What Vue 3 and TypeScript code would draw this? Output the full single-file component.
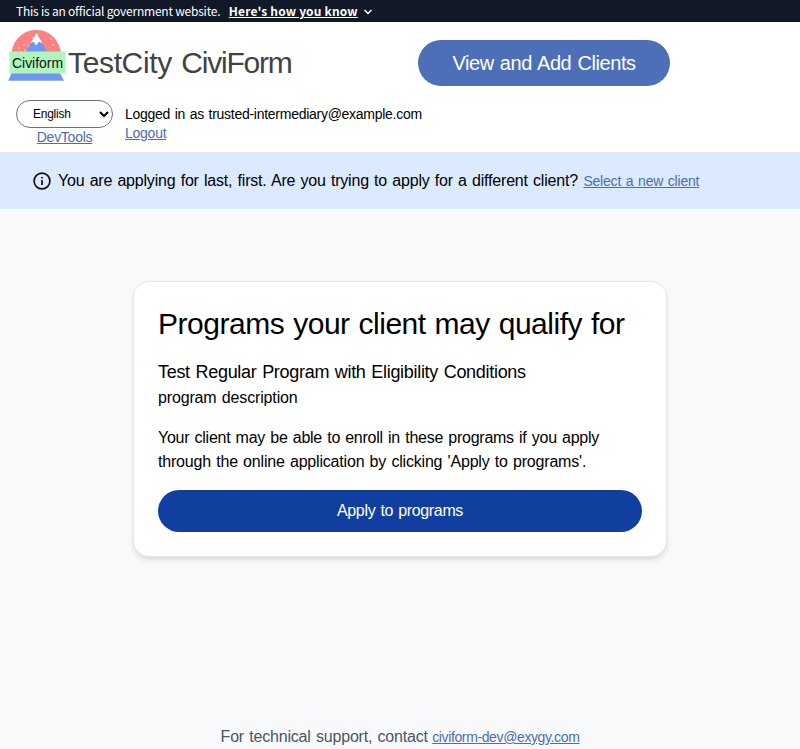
<script setup lang="ts">
import { ref } from 'vue'

const language = ref('English')
const client = 'last, first'
const account = 'trusted-intermediary@example.com'
const snow: [number, number][] = [[13, 24], [16, 16], [20, 17], [25, 9], [43, 10], [45, 16], [50, 14], [17, 21], [11, 19]]
</script>

<template>
  <div class="page">
    <div class="gov-banner">
      <span class="gov-text">This is an official government website.</span>
      <button class="gov-toggle" type="button">Here's how you know</button>
      <svg class="chevron" viewBox="0 0 10 8" aria-hidden="true"><path d="M1.5 2 L5 5.5 L8.5 2" /></svg>
    </div>

    <header class="header">
      <div class="header-main">
        <a class="brand">
          <svg class="logo" viewBox="0 0 60 54" aria-hidden="true">
            <path d="M3.500 23 C6 8 17 1 28.500 1 C40 1 50 8 53 23 Z" fill="#fb8383" />
            <circle v-for="([x, y], i) in snow" :key="i" :cx="x" :cy="y" r=".65" fill="#fff" />
            <path d="M17.500 23 L28.500 4.500 L39.500 23 Z" fill="#7098f0" />
            <path d="M22.500 14.500 L28.500 4 L34.500 14.500 L31 12.500 L28 16.500 L25.500 12.500 Z" fill="#fff" />
            <path d="M3.500 44 H52 L56 51.800 H0.300 Z" fill="#7098f0" />
            <rect x="1.500" y="22.500" width="56" height="22" fill="#aff5bd" />
            <text x="29.500" y="38.500" text-anchor="middle" class="logo-text" textLength="51" lengthAdjust="spacingAndGlyphs">Civiform</text>
          </svg>
          <span class="brand-name"><span class="brand-city">TestCity</span> <span class="brand-product">CiviForm</span></span>
        </a>
        <div class="header-action">
          <button class="clients-button" type="button">View and Add Clients</button>
        </div>
      </div>
      <div class="account">
        <div class="tools">
          <select v-model="language" aria-label="Language"><option>English</option></select>
          <a class="link devtools" href="#">DevTools</a>
        </div>
        <div class="session">
          <span class="session-name">Logged in as {{ account }}</span>
          <a class="link logout" href="#">Logout</a>
        </div>
      </div>
    </header>

    <div class="notice">
      <svg class="info" viewBox="0 0 18 18" aria-hidden="true">
        <circle cx="9" cy="9" r="7.900" />
        <path d="M9 8 V13" /><path d="M9 4.900 V6.500" />
      </svg>
      <span class="notice-text">You are applying for {{ client }}. Are you trying to apply for a different client?</span>
      <a class="link select-client" href="#">Select a new client</a>
    </div>

    <main class="main">
      <section class="card">
        <h1>Programs your client may qualify for</h1>
        <h2>Test Regular Program with Eligibility Conditions</h2>
        <p class="description">program description</p>
        <p class="help">Your client may be able to enroll in these programs if you apply<br>through the online application by clicking 'Apply to programs'.</p>
        <button class="apply" type="button">Apply to programs</button>
      </section>
    </main>

    <footer class="footer">
      <span class="footer-text">For technical support, contact</span>
      <a class="link support" href="#">civiform-dev@exygy.com</a>
    </footer>
  </div>
</template>

<style>
body { margin: 0; overflow: hidden; background: #f8f9fb; }
</style>

<style scoped>
* { box-sizing: border-box; }
.page { height: 749px; display: flex; flex-direction: column; overflow: hidden; font-family: "Liberation Sans", Arial, sans-serif; font-size: 16px; color: #000; white-space: nowrap; word-spacing: 1px; }
button { font-family: inherit; border: 0; cursor: pointer; word-spacing: 1px; }
.gov-banner { height: 22px; padding-left: 16px; display: flex; align-items: center; background: #111827; color: #fff; font-family: "Noto Sans CJK SC", sans-serif; font-size: 12px; line-height: 22px; word-spacing: 0; }
.gov-text { letter-spacing: -0.22px; }
.gov-toggle { margin-left: 8.5px; padding: 0; background: none; color: #fff; font-size: 12px; line-height: 22px; font-weight: 700; text-decoration: underline; letter-spacing: .16px; word-spacing: 0; }
.chevron { width: 10px; height: 8px; margin: 2px 0 0 5px; fill: none; stroke: #fff; stroke-width: 1.5; }
.header { height: 131px; background: #fff; border-bottom: 1px solid #e5e7eb; }
.header-main { height: 78px; display: grid; grid-template-columns: 1fr 1fr; }
.brand { display: flex; align-items: center; padding: 4px 0 0 8px; }
.logo { width: 60px; height: 54px; margin-top: -14px; }
.logo-text { font: 14px "Liberation Sans", Arial, sans-serif; fill: #111; }
.brand-name { font-size: 30px; line-height: 36px; color: #424242; }
.brand-city { letter-spacing: -.35px; }
.brand-product { letter-spacing: -1.2px; }
.header-action { padding: 18px 0 0 18px; }
.clients-button { width: 252px; height: 46px; padding: 0; border-radius: 23px; background: #4d6fb8; color: #fff; font-size: 20px; line-height: 46px; letter-spacing: -.42px; }
.account { display: flex; gap: 12px; padding-left: 16px; }
.tools { width: 97px; display: flex; flex-direction: column; align-items: center; }
select { display: block; width: 97px; height: 28px; padding: 0 0 0 12px; border: 1px solid #6b7280; border-radius: 14px; background: #fff; color: #000; font-family: inherit; font-size: 12px; letter-spacing: -.25px; }
.link { color: #4b6cb7; font-size: 14px; line-height: 20px; text-decoration: underline; }
.devtools { line-height: 18px; letter-spacing: -.26px; }
.session { display: flex; flex-direction: column; align-items: flex-start; padding-top: 4px; font-size: 14px; line-height: 20px; }
.session-name { letter-spacing: -.27px; }
.logout { line-height: 18px; letter-spacing: -.25px; }
.notice { height: 56px; padding-left: 33px; display: flex; align-items: center; background: #dbeafe; }
.info { width: 18px; height: 18px; margin-right: 7px; fill: none; stroke: #111; stroke-width: 1.7; }
.notice-text { letter-spacing: -.2px; }
.select-client { margin: 0 0 1px 5.5px; letter-spacing: -.2px; }
.main { flex: 1; padding: 72px 133px 0; }
.card { width: 534px; height: 276px; padding: 24px; border: 1px solid #e5e7eb; border-radius: 16px; background: #fff; box-shadow: 0 4px 6px -1px rgb(0 0 0 / .1), 0 2px 4px -1px rgb(0 0 0 / .06); }
h1 { margin: 0; font-size: 30px; line-height: 36px; font-weight: 400; letter-spacing: -.47px; }
h2 { margin: 16px 0 0; font-size: 18px; line-height: 28px; font-weight: 400; letter-spacing: -.3px; }
p { margin: 0; line-height: 24px; }
.description { letter-spacing: -.15px; }
.help { margin-top: 16px; letter-spacing: -.19px; word-spacing: 1px; }
.help::first-line { letter-spacing: -.25px; }
.apply { display: block; width: 484px; height: 42px; margin-top: 16px; padding: 0; border-radius: 21px; background: #113f9f; color: #fff; font-size: 16px; line-height: 42px; letter-spacing: -.34px; }
.footer { height: 24px; display: flex; justify-content: center; gap: 4.5px; line-height: 24px; color: #4b5563; }
.footer-text { letter-spacing: -.19px; }
.support { line-height: 25px; letter-spacing: -.38px; }
</style>
